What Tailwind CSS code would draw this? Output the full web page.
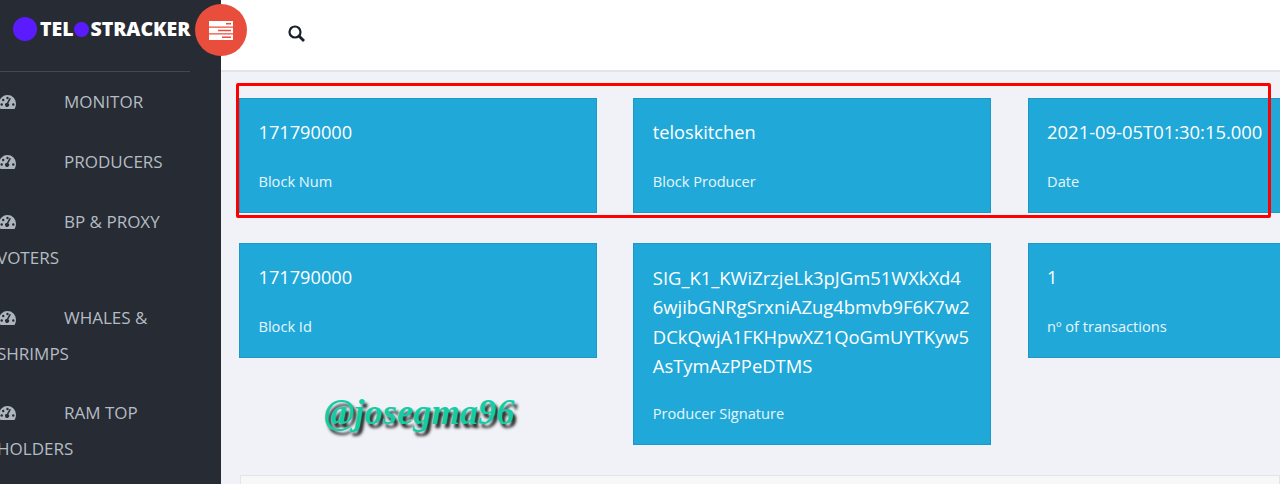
<!DOCTYPE html>
<html lang="en">
<head>
<meta charset="utf-8">
<script src="https://cdn.jsdelivr.net/npm/@tailwindcss/browser@4"></script>
</head>
<body class="m-0 h-[484px] w-[1280px] overflow-hidden bg-[#f0f2f7] font-['Open_Sans',sans-serif]">
<div class="relative flex h-[484px] w-[1280px] overflow-hidden">
  <aside class="relative z-10 h-full w-[221px] shrink-0 overflow-hidden bg-[#272b33]">
    <div class="flex h-[71px] items-start pl-[13px] pt-[17px]">
      <span class="h-6 w-6 shrink-0 rounded-full bg-[#5a1cff]"></span>
      <span class="ml-[3px] flex h-6 items-center text-[19.5px] font-extrabold leading-6 tracking-[-0.03px] text-white">TEL<span class="mx-[1px] h-[15px] w-[15px] rounded-full bg-[#5a1cff]"></span>STRACKER</span>
    </div>
    <div class="h-px w-[190px] bg-[#44484e]"></div>
    <ul class="ml-[-3px] w-[200px] text-[17px] leading-9 text-[#b4bcc4]">
      <li class="py-3"><svg class="ml-[2px] mr-[48px] inline-block h-[14px] w-[17px] align-[-1px]" viewBox="0 0 17 14"><use href="#gauge"/></svg>MONITOR</li>
      <li class="py-3"><svg class="ml-[2px] mr-[48px] inline-block h-[14px] w-[17px] align-[-1px]" viewBox="0 0 17 14"><use href="#gauge"/></svg>PRODUCERS</li>
      <li class="py-3"><svg class="ml-[2px] mr-[48px] inline-block h-[14px] w-[17px] align-[-1px]" viewBox="0 0 17 14"><use href="#gauge"/></svg>BP &amp; PROXY VOTERS</li>
      <li class="pb-[11px] pt-3"><svg class="ml-[2px] mr-[48px] inline-block h-[14px] w-[17px] align-[-1px]" viewBox="0 0 17 14"><use href="#gauge"/></svg>WHALES &amp; SHRIMPS</li>
      <li class="py-3"><svg class="ml-[2px] mr-[48px] inline-block h-[14px] w-[17px] align-[-1px]" viewBox="0 0 17 14"><use href="#gauge"/></svg>RAM TOP HOLDERS</li>
    </ul>
  </aside>
  <main class="min-w-0 flex-1">
    <header class="flex h-[72px] items-start border-b-2 border-[#e2e4e9] bg-white pl-[67px] pt-[25px]">
      <svg class="h-[17px] w-[17px]" viewBox="0 0 17 17" fill="none" stroke="#15202b"><circle cx="7" cy="7" r="5.5" stroke-width="2.2"/><path d="M11 11l5 5" stroke-width="2.8"/></svg>
    </header>
    <div class="flex w-[1100px] gap-[36.3px] pl-[18px] pt-[26px]">
      <div class="h-[115px] w-[358px] shrink-0 border border-[#1b98c8] bg-[#20a8d8] pl-[18.500px] pr-[19px] pt-[21px] text-white">
        <p class="text-[18.200px] leading-6">171790000</p><p class="mt-[27px] text-[14.6px] leading-5 text-white/90">Block Num</p>
      </div>
      <div class="h-[115px] w-[358px] shrink-0 border border-[#1b98c8] bg-[#20a8d8] pl-[18.500px] pr-[19px] pt-[21px] text-white">
        <p class="text-[18.200px] leading-6">teloskitchen</p><p class="mt-[27px] text-[14.6px] leading-5 text-white/90">Block Producer</p>
      </div>
      <div class="h-[115px] w-[358px] shrink-0 border border-[#1b98c8] bg-[#20a8d8] pl-[18.500px] pr-[19px] pt-[21px] text-white">
        <p class="whitespace-nowrap text-[18.400px] leading-6">2021-09-05T01:30:15.000</p><p class="mt-[27px] text-[14.6px] leading-5 text-white/90">Date</p>
      </div>
    </div>
    <div class="flex w-[1100px] items-start gap-[36.3px] pl-[18px] pt-[30px]">
      <div class="h-[115px] w-[358px] shrink-0 border border-[#1b98c8] bg-[#20a8d8] pl-[18.500px] pr-[19px] pt-[21px] text-white">
        <p class="text-[18.200px] leading-6">171790000</p><p class="mt-[27px] text-[14.6px] leading-5 text-white/90">Block Id</p>
      </div>
      <div class="h-[202px] w-[358px] shrink-0 border border-[#1b98c8] bg-[#20a8d8] pl-[18.500px] pr-[19px] pt-[19px] text-white">
        <p class="whitespace-nowrap text-[18.400px] leading-[29.3px]">SIG_K1_KWiZrzjeLk3pJGm51WXkXd4<br>6wjibGNRgSrxniAZug4bmvb9F6K7w2<br>DCkQwjA1FKHpwXZ1QoGmUYTKyw5<br>AsTymAzPPeDTMS</p><p class="mt-[23px] text-[14.6px] leading-5 text-white/90">Producer Signature</p>
      </div>
      <div class="h-[115px] w-[358px] shrink-0 border border-[#1b98c8] bg-[#20a8d8] pl-[18.500px] pr-[19px] pt-[21px] text-white">
        <p class="text-[18.200px] leading-6">1</p><p class="mt-[27px] text-[14.6px] leading-5 text-white/90">nº of transactions</p>
      </div>
    </div>
  </main>
  <div class="absolute left-[240px] top-[475px] h-[20px] w-[1040px] border border-[#e2e4e9] bg-[#f7f7f7]"></div>
  <div class="absolute left-[236px] top-[83px] h-[135px] w-[1035px] rounded-[2px] border-[3px] border-[#f00]"></div>
  <div class="absolute left-[324px] top-[390px] font-['Liberation_Serif',serif] text-[36.5px] font-bold italic leading-[44px] text-[#14cda4] [text-shadow:3px_4px_3px_rgba(0,0,0,0.85)]">@josegma96</div>
  <div class="absolute left-[194.500px] top-[4px] z-20 flex h-[52px] w-[52px] items-center justify-center rounded-full bg-[#e94e3c]">
    <svg class="h-[19px] w-[24px]" viewBox="0 0 24 19"><path fill="#fff" fill-rule="evenodd" d="M0 0h24v5.500H0zM0 6.750h24v5.500H0zM0 13.500h24v5.500H0zM17 2v1.500h5V2zM9 8.750v1.500h13v-1.500zM13 15.500V17h9v-1.500z"/></svg>
  </div>
</div>
<svg class="hidden"><defs><g id="gauge"><path fill="#aeb5bb" d="M8.500 0A8.500 8.500 0 0 1 17 8.500c0 2-.6 4-1.500 5.500h-14A10 10 0 0 1 0 8.500 8.500 8.500 0 0 1 8.500 0z"/><g fill="#272b33"><circle cx="8.500" cy="3" r="1.200"/><circle cx="4.200" cy="5" r="1.200"/><circle cx="2.700" cy="9.500" r="1.200"/><circle cx="14.300" cy="9.500" r="1.200"/><path d="M12 3.500 9.300 8.300a2 2 0 1 1-1.500-.4l2.700-5z"/></g></g></defs></svg>
</body>
</html>
